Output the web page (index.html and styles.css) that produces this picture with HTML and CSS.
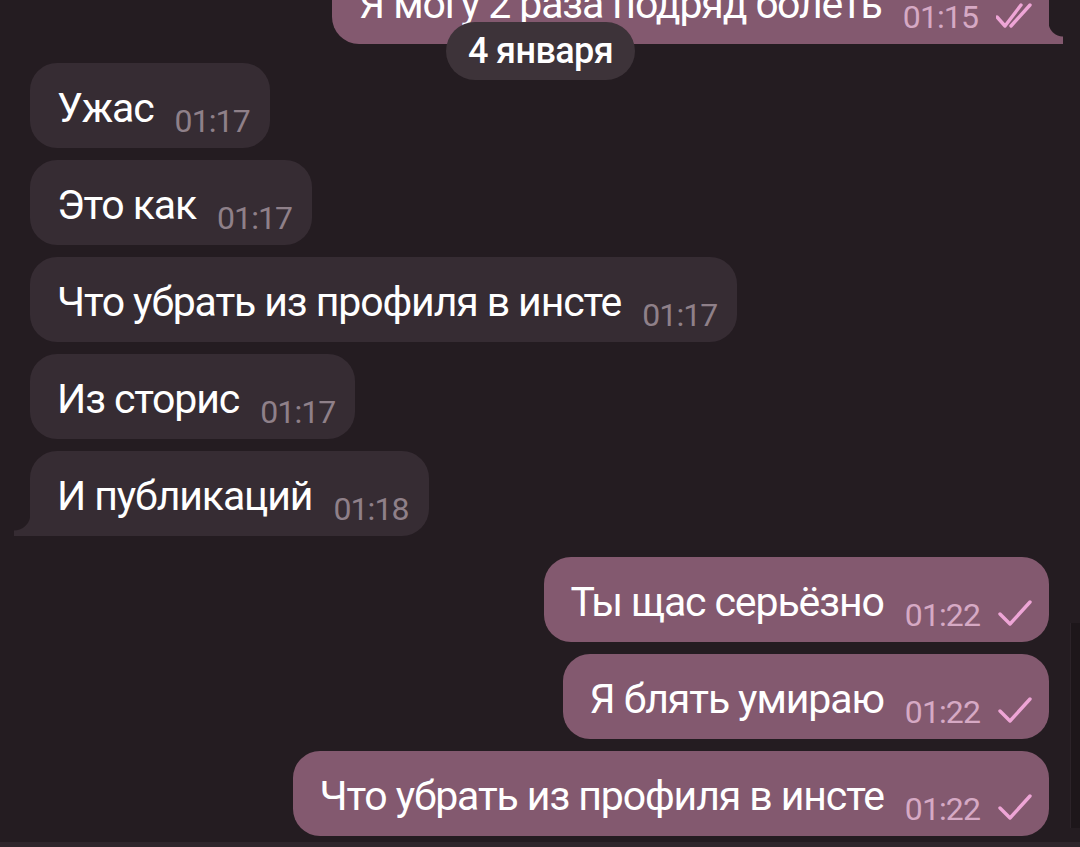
FILE: index.html
```html
<!DOCTYPE html>
<html lang="ru">
<head>
    <meta charset="UTF-8">
    <meta name="viewport" content="width=device-width, initial-scale=1.0">
    <title>Чат</title>
    <link rel="stylesheet" href="styles.css">
</head>
<body>
    <main class="chat">
        <div class="msg out tail-right first">
            <span class="text">Я могу 2 раза подряд болеть</span>
            <span class="meta">01:15
                <svg class="check" viewBox="2 0 36 30" width="36" height="30"><path d="M3 16 L11 25 L27 4 M17 25 L36 4" /></svg>
            </span>
        </div>

        <div class="msg in">
            <span class="text">Ужас</span>
            <span class="meta">01:17</span>
        </div>
        <div class="msg in">
            <span class="text">Это как</span>
            <span class="meta">01:17</span>
        </div>
        <div class="msg in">
            <span class="text">Что убрать из профиля в инсте</span>
            <span class="meta">01:17</span>
        </div>
        <div class="msg in">
            <span class="text">Из сторис</span>
            <span class="meta">01:17</span>
        </div>
        <div class="msg in tail-left">
            <span class="text">И публикаций</span>
            <span class="meta">01:18</span>
        </div>

        <div class="msg out gap-top">
            <span class="text">Ты щас серьёзно</span>
            <span class="meta">01:22
                <svg class="check" viewBox="3 0 34 30" width="34" height="30"><path d="M5 15 L15 25 L35 3" /></svg>
            </span>
        </div>
        <div class="msg out">
            <span class="text">Я блять умираю</span>
            <span class="meta">01:22
                <svg class="check" viewBox="3 0 34 30" width="34" height="30"><path d="M5 15 L15 25 L35 3" /></svg>
            </span>
        </div>
        <div class="msg out">
            <span class="text">Что убрать из профиля в инсте</span>
            <span class="meta">01:22
                <svg class="check" viewBox="3 0 34 30" width="34" height="30"><path d="M5 15 L15 25 L35 3" /></svg>
            </span>
        </div>

        <div class="date">4 января</div>
        <div class="scrollbar"></div>
    </main>
    <footer class="bar"></footer>
</body>
</html>
```

FILE: styles.css
```css
html, body {
    margin: 0;
    padding: 0;
}
body {
    width: 1080px;
    height: 847px;
    background-color: #241c21;
    font-family: Roboto, "Noto Sans", sans-serif;
    color: #ffffff;
    display: flex;
    flex-direction: column;
    overflow: hidden;
}
.chat {
    position: relative;
    flex: 1;
    display: flex;
    flex-direction: column;
    justify-content: flex-end;
    gap: 12px;
    padding: 0 31px 6px 30px;
    overflow: hidden;
}
.bar {
    height: 5px;
    background-color: #2f262c;
}
.msg {
    position: relative;
    flex-shrink: 0;
    display: flex;
    align-items: flex-start;
    height: 85px;
    box-sizing: border-box;
    padding: 21px 20px 0 27px;
    border-radius: 27px;
}
.msg.in {
    align-self: flex-start;
    background-color: #362c33;
}
.msg.out {
    align-self: flex-end;
    background-color: #83596f;
    padding-right: 17px;
}
.msg.first {
    margin-bottom: 7px;
}
.msg.gap-top {
    margin-top: 9px;
}
.text {
    font-size: 41px;
    line-height: 48px;
    letter-spacing: -1.1px;
    white-space: nowrap;
}
.meta {
    display: flex;
    align-items: center;
    margin-top: 19px;
    margin-left: 21px;
    font-size: 32px;
    line-height: 37px;
    letter-spacing: -0.9px;
    color: #8f8089;
    white-space: nowrap;
}
.out .meta {
    color: #d6a9c4;
}
.check {
    margin-left: 18px;
    margin-top: -4px;
    fill: none;
    stroke: #eea5d6;
    stroke-width: 3.4;
    stroke-linecap: round;
    stroke-linejoin: round;
}
.tail-left {
    border-bottom-left-radius: 0;
}
.tail-left::before {
    content: "";
    position: absolute;
    left: -16px;
    bottom: 0;
    width: 16px;
    height: 22px;
    background: radial-gradient(circle at 0 0, transparent 16px, #362c33 17px);
}
.tail-right {
    border-bottom-right-radius: 0;
}
.tail-right::after {
    content: "";
    position: absolute;
    right: -14px;
    bottom: 0;
    width: 14px;
    height: 22px;
    background: radial-gradient(circle at 100% 0, transparent 14px, #83596f 15px);
}
.date {
    position: absolute;
    top: 22px;
    left: 446px;
    width: 189px;
    height: 58px;
    border-radius: 29px;
    background-color: #3d3339;
    font-size: 36px;
    font-weight: 500;
    letter-spacing: -0.6px;
    line-height: 58px;
    text-align: center;
}
.scrollbar {
    position: absolute;
    top: 623px;
    right: 0;
    width: 9px;
    height: 205px;
    background-color: #1d161a;
    border-left: 1px solid #2c2329;
}
```
